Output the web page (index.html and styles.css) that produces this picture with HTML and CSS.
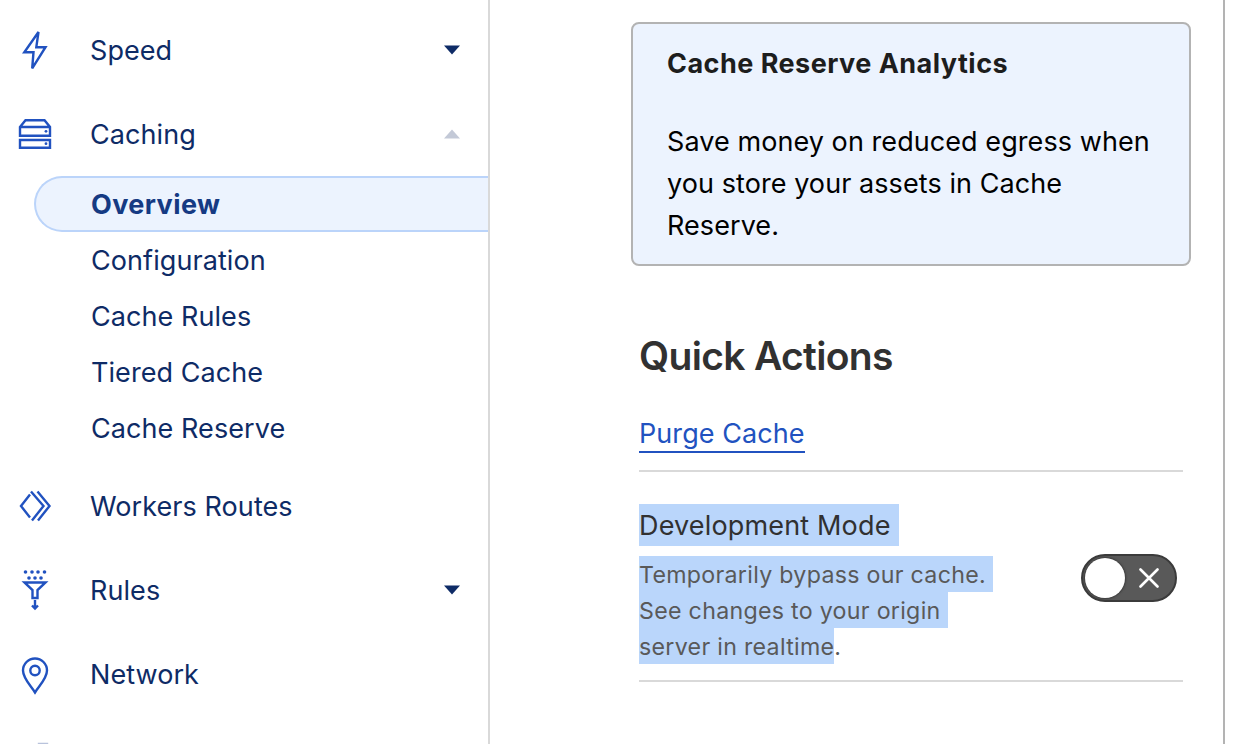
FILE: index.html
```html
<!DOCTYPE html>
<html lang="en">
<head>
<meta charset="utf-8">
<title>Caching</title>
<link rel="stylesheet" href="styles.css">
</head>
<body>
<div class="app">
  <nav class="sidebar">
    <a class="item"><svg class="icon" viewBox="0 0 40 44"><path d="M23.500 4 9.300 24.200H18.500L17.200 40.300 30.500 19.200H21.300Z"/></svg><span class="label">Speed</span><svg class="caret" viewBox="0 0 16 10"><path d="M0 .5h16L8 9.500z"/></svg></a>
    <a class="item"><svg class="icon" viewBox="0 0 40 44"><path d="M5 15 10.500 8.200h19L35 15V23.800H5ZM5 15H35M5 28H35V35.800H5Z"/><circle class="solid" cx="31" cy="19.300" r="1.400"/><circle class="solid" cx="31" cy="31.700" r="1.400"/></svg><span class="label">Caching</span><svg class="caret caret-open" viewBox="0 0 16 10"><path d="M0 9.500h16L8 .5z"/></svg></a>
    <div class="submenu">
      <a class="sub active">Overview</a>
      <a class="sub">Configuration</a>
      <a class="sub">Cache Rules</a>
      <a class="sub">Tiered Cache</a>
      <a class="sub">Cache Reserve</a>
    </div>
    <a class="item"><svg class="icon" viewBox="0 0 40 44"><path d="M15 10.500 6 22l9 11.500M16 7.500 28.500 22 17 36.500M22.500 7.500 34.500 22 23 36.500"/></svg><span class="label">Workers Routes</span></a>
    <a class="item"><svg class="icon" viewBox="0 0 40 44"><path d="M9.500 14.500H30.500L22.500 22v8h-5v-8ZM20 32v8.500M17 37.500l3 3 3-3"/><g class="solid"><circle cx="10.500" cy="4" r="1.800"/><circle cx="17" cy="4" r="1.800"/><circle cx="23" cy="4" r="1.800"/><circle cx="29.500" cy="4" r="1.800"/><circle cx="14" cy="10" r="1.800"/><circle cx="20" cy="10" r="1.800"/><circle cx="26" cy="10" r="1.800"/></g></svg><span class="label">Rules</span><svg class="caret" viewBox="0 0 16 10"><path d="M0 .5h16L8 9.500z"/></svg></a>
    <a class="item"><svg class="icon" viewBox="0 0 40 44"><path d="M20 40.500C16 34 8 26.500 8 18.500a12 12 0 0 1 24 0c0 8-8 15.500-12 22Z"/><circle cx="20" cy="18.500" r="4.700"/></svg><span class="label">Network</span></a>
    <a class="item"><svg class="icon" viewBox="0 0 40 44"><path class="faint" d="M24 8h8v8h-8z"/></svg></a>
  </nav>
  <main class="content">
    <section class="card">
      <h3 class="card-title">Cache Reserve Analytics</h3>
      <p class="card-text">Save money on reduced egress when<br>you store your assets in Cache<br>Reserve.</p>
    </section>
    <section class="actions">
      <h2 class="heading">Quick Actions</h2>
      <div class="purge"><a class="link">Purge Cache</a></div>
      <div class="mode">
        <div class="mode-copy">
          <div class="mode-title"><span class="hl hl-title">Development Mode</span></div>
          <div class="mode-desc">
            <div><span class="hl">Temporarily bypass our cache.</span></div>
            <div><span class="hl">See changes to your origin</span></div>
            <div><span class="hl hl-end">server in realtime</span>.</div>
          </div>
        </div>
        <div class="toggle"><span class="knob"></span><svg class="cross" viewBox="0 0 20 20"><path d="M1.500 1.500l17 17M18.500 1.500l-17 17"/></svg></div>
      </div>
    </section>
  </main>
</div>
</body>
</html>
```
FILE: styles.css
```css
* { box-sizing: border-box; }
body { margin: 0; background: #fff; font-family: Inter, "Liberation Sans", sans-serif; font-size: 27px; line-height: 42px; letter-spacing: 0.070px; }
.app { display: flex; height: 744px; overflow: hidden; }
.sidebar { width: 490px; flex: none; border-right: 2px solid #d9d9d9; padding-top: 8px; color: #0e2b66; }
.item { display: flex; align-items: center; height: 84px; padding: 0 28px 0 15px; }
.icon { width: 40px; height: 44px; flex: none; fill: none; stroke: #2152c0; stroke-width: 2.400; }
.icon .solid { fill: #2152c0; stroke: none; }
.icon .faint { stroke: #b9c3dc; }
.label { flex: 1; margin-left: 35px; padding-top: 1px; }
.caret { width: 16px; height: 10px; fill: #0e2b66; }
.caret-open { fill: #c3c9d7; }
.submenu { margin-bottom: 8px; }
.sub { display: flex; align-items: center; height: 56px; padding: 1px 0 0 91px; }
.active { margin-left: 34px; padding-left: 55px; border: 2px solid #bbd4fa; border-right: 0; border-radius: 28px 0 0 28px; background: #ecf3fe; color: #153a83; font-weight: 700; letter-spacing: 0.400px; }
.content { width: 735px; flex: none; padding: 22px 32px 0 141px; border-right: 2px solid #b3b3b3; }
.card { width: 560px; height: 244px; padding: 19px 34px 0; border: 2px solid #b3b3b3; border-radius: 8px; background: #ecf3fe; color: #1d1d1d; }
.card-title { margin: 0 0 36px; font-size: 27px; font-weight: 700; letter-spacing: 0.470px; }
.card-text { margin: 0; color: #000; white-space: nowrap; }
.actions { width: 544px; margin: 65px 0 0 8px; color: #313131; }
.heading { margin: 0; font-size: 39px; line-height: 50px; font-weight: 600; letter-spacing: -0.670px; }
.purge { display: flex; height: 91px; padding-top: 32px; border-bottom: 2px solid #d9d9d9; }
.link { height: 40px; border-bottom: 2px solid #2152c0; color: #2152c0; }
.mode { display: flex; justify-content: space-between; height: 210px; padding: 32px 6px 0 0; border-bottom: 2px solid #d9d9d9; }
.mode-title { display: flex; height: 42px; letter-spacing: 0.160px; }
.mode-desc { margin-top: 10px; font-size: 23.200px; line-height: 38px; letter-spacing: 0.290px; color: #595959; }
.mode-desc div { display: flex; height: 36px; }
.hl { background: #bad6fb; padding-right: 7px; }
.hl-title { padding-right: 8px; line-height: 44px; }
.hl-end { padding-right: 0; }
.toggle { display: flex; align-items: center; width: 96px; height: 48px; margin-top: 50px; padding-left: 2px; border: 2px solid #3b3b3b; border-radius: 24px; background: #595959; }
.knob { width: 40px; height: 40px; border-radius: 50%; background: #fff; box-shadow: 0 0 2px 1px #3b3b3b; }
.cross { width: 20px; height: 20px; margin-left: 14px; fill: none; stroke: #fff; stroke-width: 2.600; stroke-linecap: round; }
```
